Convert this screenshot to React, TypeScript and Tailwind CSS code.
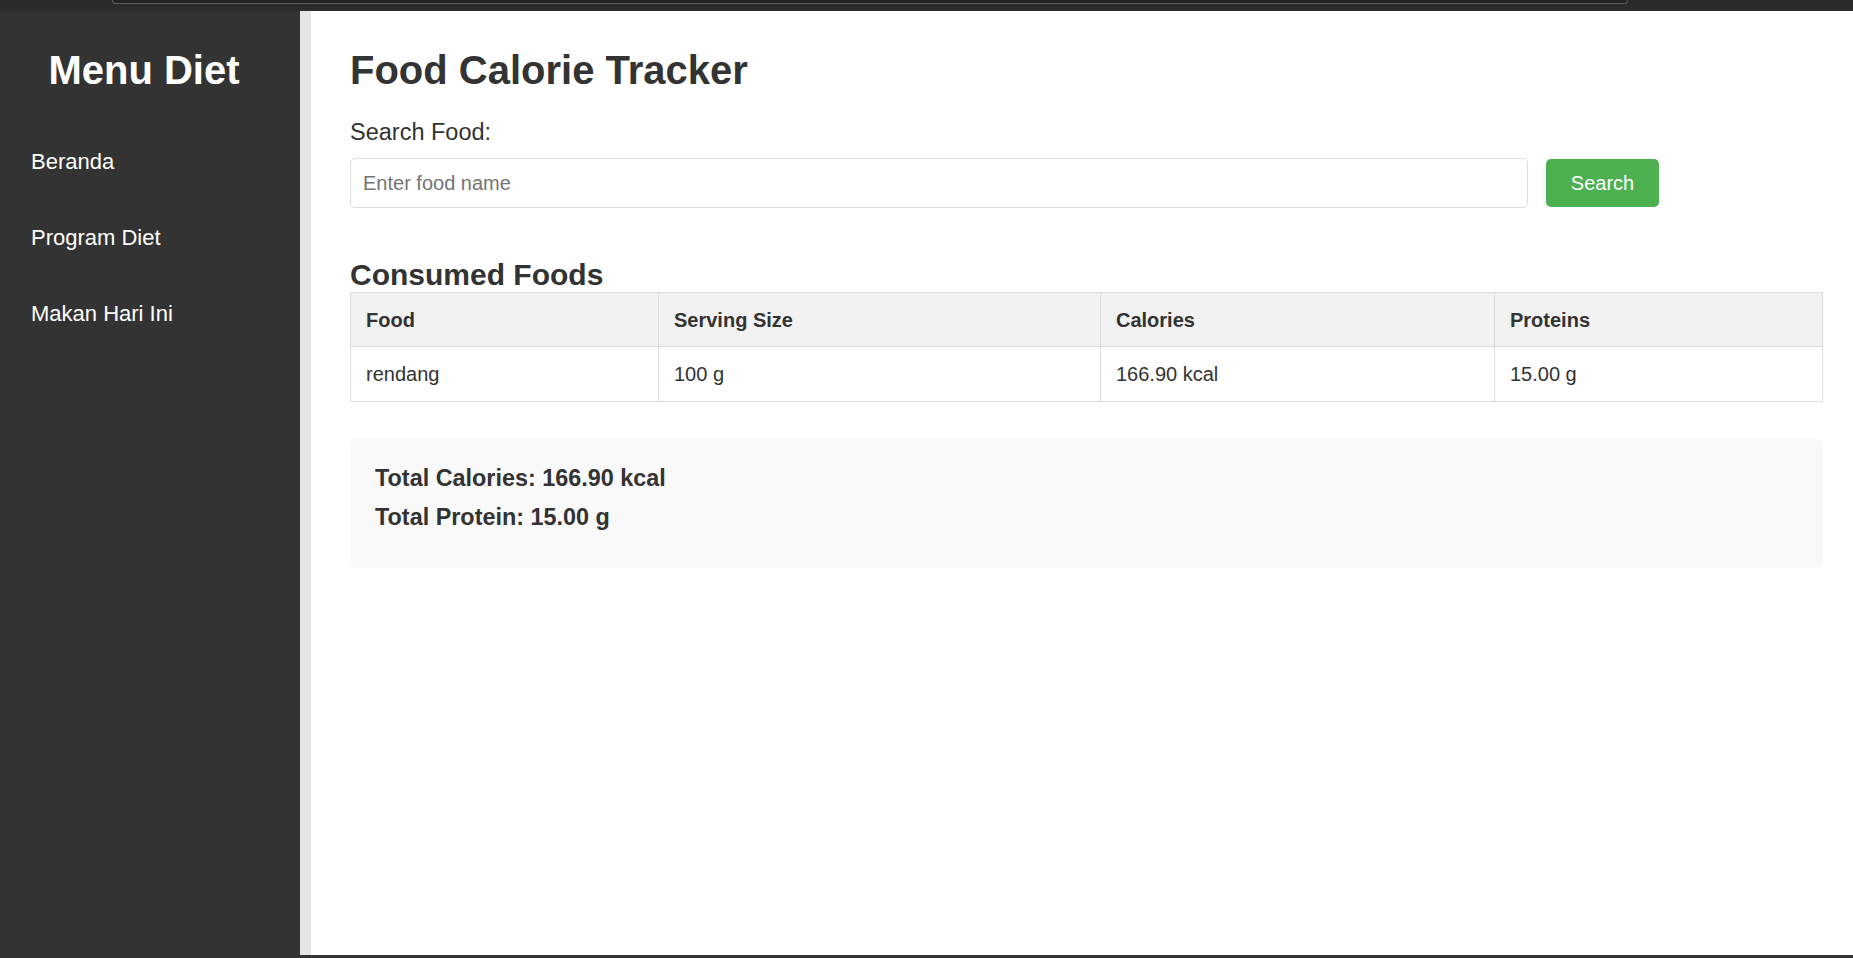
import React from "react";

const foods = [
  { name: "rendang", serving: "100 g", calories: "166.90 kcal", protein: "15.00 g" },
];

const menu = ["Beranda", "Program Diet", "Makan Hari Ini"];

const App = () => {
  return (
    <div className="w-full h-[958px] flex flex-col bg-[#2b2b2b] overflow-hidden font-['Liberation_Sans',Arial,sans-serif]">
      {/* browser chrome edge */}
      <div className="h-[11px] shrink-0 flex">
        <div className="ml-[112px] w-[1516px] h-[4px] rounded-b-[8px] border-x border-b border-[#5a5a5a] bg-[#232323]"></div>
      </div>

      <div className="flex flex-1 min-h-0">
        <aside className="w-[300px] shrink-0 bg-[#333333] pt-[36px]">
          <h2 className="pr-[12px] text-center text-white text-[40px] leading-[46px] font-bold">Menu Diet</h2>
          <nav className="mt-[56px] flex flex-col gap-[50px] pl-[31px]">
            {menu.map((item, index) => (
              <a key={index} href="#" className="text-white text-[22px] leading-[26px]">
                {item}
              </a>
            ))}
          </nav>
        </aside>
        <div className="w-[11px] shrink-0 bg-[#e6e6e6]"></div>

        <main className="flex-1 bg-white pl-[39px] pr-[30px] pt-[36px] text-[#333333]">
          <h1 className="text-[40px] leading-[46px] font-bold">Food Calorie Tracker</h1>

          <label className="block mt-[26px] text-[23.5px] leading-[26px] text-[#333333]">Search Food:</label>
          <div className="mt-[13px] flex items-center gap-[18px] w-[1309px]">
            <input
              type="text"
              placeholder="Enter food name"
              className="flex-1 h-[50px] rounded-[5px] border border-[#dddddd] pl-[12px] text-[20px] text-[#333] placeholder:text-[#757575] outline-none"
            />
            <button className="w-[113px] h-[48px] rounded-[5px] bg-[#4caf50] text-white text-[20px]">Search</button>
          </div>

          <h2 className="mt-[50px] text-[30px] leading-[34px] font-bold">Consumed Foods</h2>
          <table className="w-full table-fixed border-collapse text-[20px] leading-[23px]">
            <thead>
              <tr className="bg-[#f2f2f2]">
                <th className="w-[308px] border border-[#dddddd] px-[15px] pt-[16px] pb-[14px] text-left font-bold">Food</th>
                <th className="w-[442px] border border-[#dddddd] px-[15px] pt-[16px] pb-[14px] text-left font-bold">Serving Size</th>
                <th className="w-[394px] border border-[#dddddd] px-[15px] pt-[16px] pb-[14px] text-left font-bold">Calories</th>
                <th className="border border-[#dddddd] px-[15px] pt-[16px] pb-[14px] text-left font-bold">Proteins</th>
              </tr>
            </thead>
            <tbody>
              {foods.map((food, index) => (
                <tr key={index}>
                  <td className="border border-[#dddddd] px-[15px] pt-[16px] pb-[15px]">{food.name}</td>
                  <td className="border border-[#dddddd] px-[15px] pt-[16px] pb-[15px]">{food.serving}</td>
                  <td className="border border-[#dddddd] px-[15px] pt-[16px] pb-[15px]">{food.calories}</td>
                  <td className="border border-[#dddddd] px-[15px] pt-[16px] pb-[15px]">{food.protein}</td>
                </tr>
              ))}
            </tbody>
          </table>

          <div className="mt-[37px] rounded-[6px] bg-[#f9f9f9] pl-[25px] pr-[25px] pt-[26px] pb-[37px] flex flex-col gap-[12px]">
            <h3 className="text-[23.4px] leading-[27px] font-bold">Total Calories: 166.90 kcal</h3>
            <h3 className="text-[23.4px] leading-[27px] font-bold">Total Protein: 15.00 g</h3>
          </div>
        </main>
      </div>
      <div className="h-[3px] shrink-0 bg-[#333333]"></div>
    </div>
  );
};

export default App;
